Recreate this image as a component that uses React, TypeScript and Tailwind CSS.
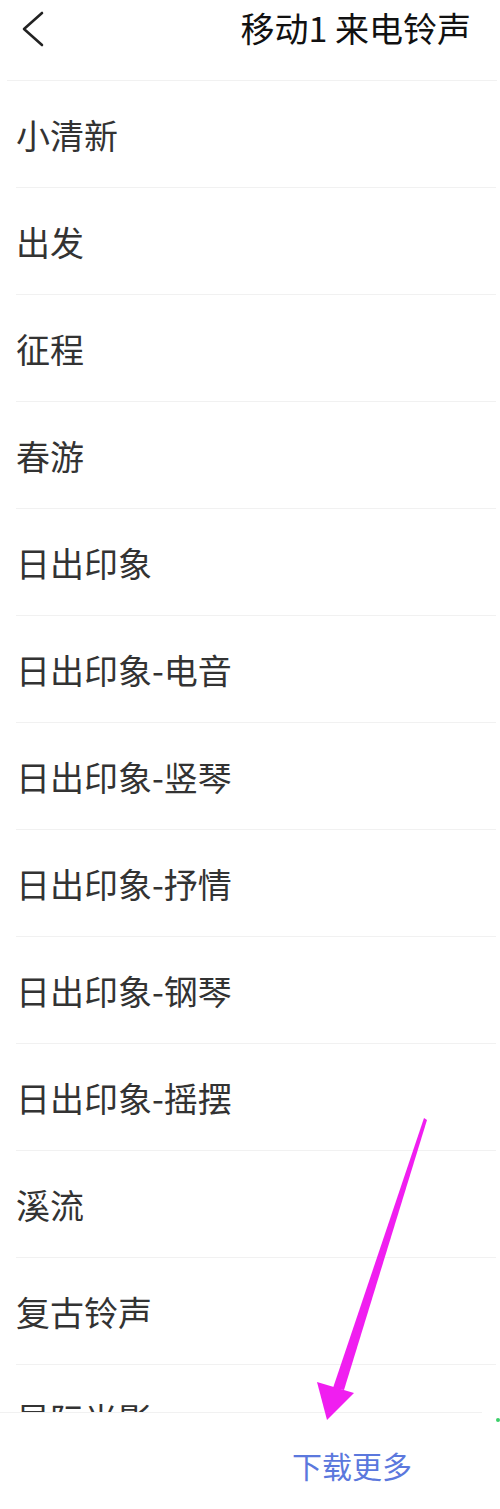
import React from "react";

const items = [
  "小清新",
  "出发",
  "征程",
  "春游",
  "日出印象",
  "日出印象-电音",
  "日出印象-竖琴",
  "日出印象-抒情",
  "日出印象-钢琴",
  "日出印象-摇摆",
  "溪流",
  "复古铃声",
  "星际光影",
];

export default function App() {
  return (
    <div
      className="relative w-[500px] h-[1509px] bg-white flex flex-col overflow-hidden"
      style={{ fontFamily: '"Noto Sans CJK SC", "Noto Sans", sans-serif' }}
    >
      <div className="relative h-[81px] shrink-0 flex items-center">
        <svg className="absolute left-[18px] top-[8px]" width="32" height="42" viewBox="0 0 32 42">
          <polyline points="24,5 6,21 24,37" fill="none" stroke="#222" strokeWidth="2.6" strokeLinecap="round" strokeLinejoin="round" />
        </svg>
        <div className="ml-auto mr-[29px] -mt-[26px] text-[34px] leading-none font-normal text-[#111]">移动1 来电铃声</div>
        <div className="absolute left-[7px] right-[3px] bottom-0 h-px bg-[#f1f1f1]" />
      </div>
      <div className="flex-1 overflow-hidden">
        {items.map((t) => (
          <div key={t} className="relative h-[107px] flex items-center pl-[16px]">
            <span className="text-[34px] leading-none text-[#333]">{t}</span>
            <div className="absolute left-[16px] right-[4px] bottom-0 h-px bg-[#f1f1f1]" />
          </div>
        ))}
      </div>
      <div className="relative h-[97px] shrink-0 bg-white flex items-center">
        <div className="absolute left-0 right-[18px] top-0 h-px bg-[#f1f1f1]" />
        <span className="ml-[292px] mt-[8px] text-[30px] leading-none text-[#5b78dd]">下载更多</span>
      </div>
      <svg className="absolute left-0 top-0 pointer-events-none" width="500" height="1509" viewBox="0 0 500 1509">
        <polygon points="424,1118 427,1120 344,1390 333,1388" fill="#f01ef0" />
        <polygon points="317,1382 354,1393 327,1420" fill="#f01ef0" />
      </svg>
      <div className="absolute left-[496px] top-[1418px] w-[4px] h-[4px] rounded-full bg-[#3ccf6a]" />
    </div>
  );
}
